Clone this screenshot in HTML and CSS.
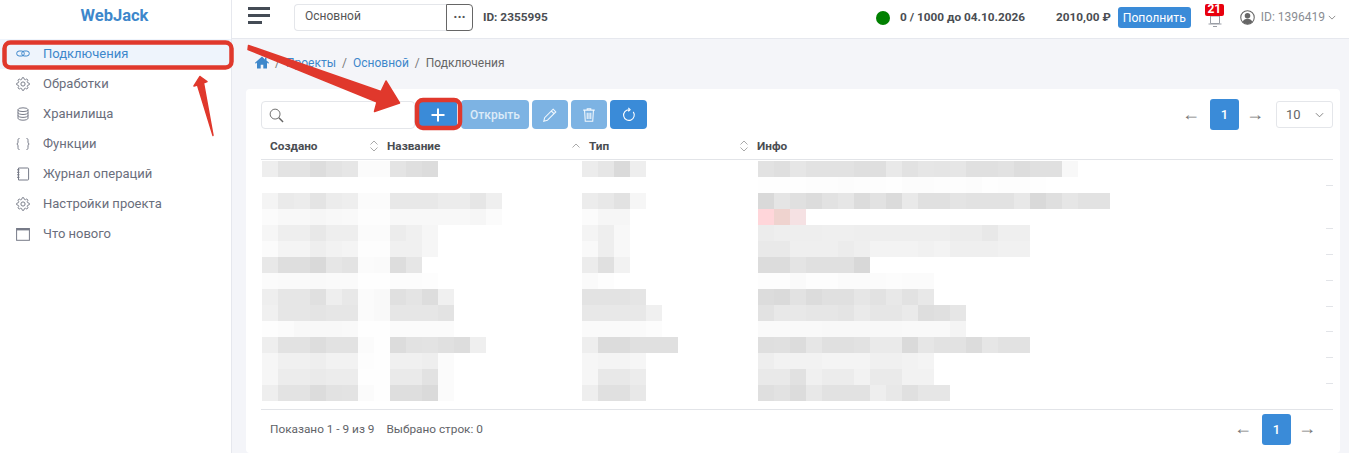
FILE: index.html
```html
<!DOCTYPE html>
<html lang="en">
<head>
    <meta charset="UTF-8">
    <meta name="viewport" content="width=device-width, initial-scale=1.0">
    <title>Подключения - WebJack</title>
    <link rel="stylesheet" href="styles.css">
</head>
<body>
    <svg class="defs" width="0" height="0">
        <symbol id="i-gear" viewBox="0 0 24 24">
            <g stroke-width="1.7">
            <circle cx="12" cy="12" r="3.6"/>
            <path d="M19.4 15a1.65 1.65 0 0 0 .33 1.82l.06.06a2 2 0 0 1 0 2.83 2 2 0 0 1-2.83 0l-.06-.06a1.65 1.65 0 0 0-1.82-.33 1.65 1.65 0 0 0-1 1.51V21a2 2 0 0 1-2 2 2 2 0 0 1-2-2v-.09A1.65 1.65 0 0 0 9 19.4a1.65 1.65 0 0 0-1.82.33l-.06.06a2 2 0 0 1-2.83 0 2 2 0 0 1 0-2.83l.06-.06a1.65 1.65 0 0 0 .33-1.82 1.65 1.65 0 0 0-1.51-1H3a2 2 0 0 1-2-2 2 2 0 0 1 2-2h.09A1.65 1.65 0 0 0 4.6 9a1.65 1.65 0 0 0-.33-1.82l-.06-.06a2 2 0 0 1 0-2.83 2 2 0 0 1 2.83 0l.06.06a1.65 1.65 0 0 0 1.82.33H9a1.65 1.65 0 0 0 1-1.51V3a2 2 0 0 1 2-2 2 2 0 0 1 2 2v.09a1.65 1.65 0 0 0 1 1.51 1.65 1.65 0 0 0 1.82-.33l.06-.06a2 2 0 0 1 2.83 0 2 2 0 0 1 0 2.83l-.06.06a1.65 1.65 0 0 0-.33 1.82V9a1.65 1.65 0 0 0 1.51 1H21a2 2 0 0 1 2 2 2 2 0 0 1-2 2h-.09a1.65 1.65 0 0 0-1.51 1z"/>
            </g>
        </symbol>
        <symbol id="i-sort" viewBox="0 0 10 14">
            <path d="M1.5 5.5 5 2l3.5 3.5M1.5 8.5 5 12l3.5-3.5"/>
        </symbol>
    </svg>

    <aside class="sidebar">
        <div class="logo">WebJack</div>
        <nav class="menu">
            <a class="menu-item active">
                <svg class="menu-icon" viewBox="0 0 14 14"><rect x="0.7" y="4" width="7.6" height="5" rx="2.5"/><rect x="5.7" y="4" width="7.6" height="5" rx="2.5"/></svg>
                Подключения
            </a>
            <a class="menu-item">
                <svg class="menu-icon"><use href="#i-gear"/></svg>
                Обработки
            </a>
            <a class="menu-item">
                <svg class="menu-icon" viewBox="0 0 14 14"><ellipse cx="7" cy="2.7" rx="5" ry="1.9"/><path d="M2 2.7v8.6c0 1 2.2 1.9 5 1.9s5-.9 5-1.9V2.7M2 5.6c0 1 2.2 1.9 5 1.9s5-.9 5-1.9M2 8.5c0 1 2.2 1.9 5 1.9s5-.9 5-1.9"/></svg>
                Хранилища
            </a>
            <a class="menu-item">
                <svg class="menu-icon" viewBox="0 0 14 14"><path d="M3.5 1.5c-1.5 0-1.5.8-1.5 2v1.7c0 1-.4 1.6-1.2 1.8.8.2 1.2.8 1.2 1.8v1.7c0 1.2 0 2 1.5 2M10.5 1.5c1.5 0 1.500.8 1.500 2v1.700c0 1 .4 1.600 1.200 1.800-.8.2-1.200.8-1.200 1.800v1.700c0 1.200 0 2-1.500 2"/></svg>
                Функции
            </a>
            <a class="menu-item">
                <svg class="menu-icon" viewBox="0 0 14 14"><path d="M2.500 1h9.300a.8.8 0 0 1 .8.8v10.400a.8.8 0 0 1-.8.8H2.500V1zM1 2.800h2.500M1 5.300h2.500M1 7.800h2.500M1 10.300h2.500"/></svg>
                Журнал операций
            </a>
            <a class="menu-item">
                <svg class="menu-icon"><use href="#i-gear"/></svg>
                Настройки проекта
            </a>
            <a class="menu-item">
                <svg class="menu-icon" viewBox="0 0 14 14"><rect x="0.600" y="1.500" width="12.800" height="11.800"/><path class="menu-icon-bold" d="M.6 2.400h12.800"/></svg>
                Что нового
            </a>
        </nav>
    </aside>

    <div class="main">
        <header class="topbar">
            <div class="burger"><span></span><span></span><span class="short"></span></div>
            <div class="project-select">
                <div class="project-name">Основной</div>
                <div class="project-more">···</div>
            </div>
            <div class="strong project-id">ID: 2355995</div>
            <div class="status-dot"></div>
            <div class="strong quota">0 / 1000 до 04.10.2026</div>
            <div class="strong balance">2010,00 ₽</div>
            <button class="topup">Пополнить</button>
            <div class="bell">
                <svg viewBox="0 0 18 14"><path d="M4.500 2h9v7.500h-9zM2.500 10h13M7 12.500h4"/></svg>
                <span class="bell-count">21</span>
            </div>
            <svg class="user-icon" viewBox="0 0 14 14">
                <circle class="user-ring" cx="7" cy="7" r="6.300"/>
                <circle cx="7" cy="5.300" r="2.600"/>
                <path d="M2.400 11.200c.8-2 2.600-3 4.600-3s3.800 1 4.600 3A6 6 0 0 1 7 13.200a6 6 0 0 1-4.600-2z"/>
            </svg>
            <div class="user-id">ID: 1396419</div>
            <svg class="chevron" viewBox="0 0 10 6"><path d="M1 1l4 4 4-4"/></svg>
        </header>

        <div class="breadcrumb">
            <svg class="home" viewBox="0 0 14 13"><path d="M7 .5 0 6.800l.8.9L2 6.600V12.500h3.700V8.800h2.600v3.700H12V6.600l1.200 1.100.8-.9-2.500-2.300V1.500H10v1.900z"/></svg>
            <span class="sep">/</span>
            <a>Проекты</a>
            <span class="sep">/</span>
            <a>Основной</a>
            <span class="sep">/</span>
            <span class="current">Подключения</span>
        </div>

        <section class="card">
            <div class="toolbar">
                <div class="search">
                    <svg viewBox="0 0 16 16"><circle cx="6.500" cy="6.500" r="5.300"/><path class="search-handle" d="M10.500 10.500 15 15"/></svg>
                </div>
                <button class="btn btn-add">
                    <svg viewBox="0 0 16 16"><path d="M8 1.500v13M1.500 8h13"/></svg>
                </button>
                <button class="btn btn-off btn-open">Открыть</button>
                <button class="btn btn-off btn-icon">
                    <svg viewBox="0 0 18 18"><path d="M12.500 2.500l3 3L6 15l-4 1 1-4zM10.500 4.500l3 3"/></svg>
                </button>
                <button class="btn btn-off btn-icon">
                    <svg viewBox="0 0 18 18"><path d="M2.500 3.500h13M7 3.500V2h4v1.500M4 3.500l.8 12.500h8.400L14 3.500M7 6.500v7M9 6.500v7M11 6.500v7"/></svg>
                </button>
                <button class="btn btn-icon btn-reload">
                    <svg viewBox="0 0 18 18"><path d="M13.800 5.500A6 6 0 1 1 9 3M8.200 1 10.300 3 8.200 5"/></svg>
                </button>
                <div class="pager pager-top">
                    <span class="arrow">←</span>
                    <span class="page-num">1</span>
                    <span class="arrow">→</span>
                </div>
                <div class="per-page">
                    10
                    <svg class="chevron" viewBox="0 0 10 6"><path d="M1 1l4 4 4-4"/></svg>
                </div>
            </div>

            <div class="thead">
                <div class="th th-first">Создано <svg class="sort"><use href="#i-sort"/></svg></div>
                <div class="th">Название <svg class="sort sort-up" viewBox="0 0 10 14"><path d="M1.500 8.500 5 5l3.500 3.500"/></svg></div>
                <div class="th">Тип <svg class="sort"><use href="#i-sort"/></svg></div>
                <div class="th">Инфо</div>
            </div>

            <div class="rows">
                <div class="row"></div>
                <div class="row row-tall"></div>
                <div class="row"></div>
                <div class="row"></div>
                <div class="row"></div>
                <div class="row"></div>
                <div class="row"></div>
                <div class="row"></div>
                <div class="row row-last"></div>
                <div class="blur" id="blur"></div>
            </div>

            <div class="tfoot">
                <span>Показано 1 - 9 из 9</span>
                <span>Выбрано строк: 0</span>
                <div class="pager pager-bottom">
                    <span class="arrow">←</span>
                    <span class="page-num">1</span>
                    <span class="arrow">→</span>
                </div>
            </div>
        </section>
    </div>

    <!-- red annotations drawn over the screenshot -->
    <svg class="marks" viewBox="0 0 1349 453">
        <rect class="mark-box" x="4.500" y="42.500" width="227" height="25" rx="6"/>
        <rect class="mark-box" x="417" y="100" width="43" height="28" rx="6"/>
        <polygon class="mark-arrow" points="248.500,45.500 381,91.500 386,81 399.500,103 374.500,111.500 377,102 248,49.500"/>
        <polygon class="mark-arrow" points="200,76.500 207,81.500 203.500,83 213,135.500 197.500,85 194,86"/>
    </svg>

    <script src="app.js"></script>
</body>
</html>
```

FILE: styles.css
```css
* {
    box-sizing: border-box;
}

html, body {
    height: 453px;
    overflow: hidden;
}

body {
    font-family: Roboto, 'Liberation Sans', sans-serif;
    font-size: 13px;
    margin: 0;
    background: #f4f5f9;
    color: #5f6368;
    display: flex;
}

.defs {
    position: absolute;
}

svg {
    display: block;
    fill: none;
    stroke: currentColor;
}

/* sidebar */
.sidebar {
    width: 232px;
    flex: none;
    background: white;
    border-right: 1px solid #e6e8ee;
}

.logo {
    height: 39px;
    padding: 6px 2px 0 0;
    text-align: center;
    font-size: 16.500px;
    line-height: 20px;
    font-weight: 700;
    color: #3d87cb;
}

.menu-item {
    display: flex;
    align-items: center;
    gap: 13px;
    height: 30px;
    padding: 0 0 1px 16px;
    color: #6a6e7c;
    line-height: 30px;
}

.menu-item.active {
    background: #eef4fc;
    color: #3d87cb;
}

.menu-icon {
    width: 14px;
    height: 14px;
    stroke-width: 1;
    color: #777b88;
}

.active .menu-icon {
    color: #3d87cb;
}

.menu-icon-bold {
    stroke-width: 2;
}

/* top bar */
.main {
    flex: 1;
    min-width: 0;
}

.topbar {
    display: flex;
    align-items: center;
    height: 39px;
    padding: 0 13px 8px 16px;
    background: white;
    border-bottom: 1px solid #e6e8ee;
    color: #555;
}

.burger {
    width: 22px;
    margin-right: 24px;
}

.burger span {
    display: block;
    height: 3px;
    margin-bottom: 4px;
    background: #444b55;
}

.burger span:last-child {
    margin-bottom: 0;
}

.burger .short {
    width: 14px;
}

.project-select {
    display: flex;
    width: 179px;
    height: 27px;
    margin-top: 5px;
    font-size: 12px;
}

.project-name {
    flex: 1;
    padding-left: 10px;
    line-height: 23px;
    border: 1px solid #e4e6ea;
    border-right: none;
    border-radius: 4px 0 0 4px;
}

.project-more {
    width: 27px;
    text-align: center;
    line-height: 24px;
    font-size: 14px;
    font-weight: 700;
    border: 1px solid #666;
    border-radius: 0 4px 4px 0;
}

.strong {
    font-size: 11.800px;
    font-weight: 700;
    color: #4a4d52;
    margin-top: 3px;
}

.project-id {
    margin-left: 10px;
}

.status-dot {
    width: 14px;
    height: 14px;
    margin: 6px 10px 0 auto;
    border-radius: 50%;
    background: #008000;
}

.balance {
    margin-left: 31px;
}

.topup {
    width: 73px;
    height: 21px;
    margin: 5px 0 0 7px;
    padding: 0;
    border: none;
    border-radius: 3px;
    background: #3a8bd8;
    color: white;
    font: 12.200px Roboto, sans-serif;
}

.bell {
    position: relative;
    width: 20px;
    height: 22px;
    margin: 6px 0 0 14px;
    color: #9a9ea6;
}

.bell svg {
    position: absolute;
    left: 1px;
    top: 7px;
    width: 18px;
    height: 14px;
}

.bell-count {
    position: absolute;
    left: 0;
    top: -3px;
    width: 19px;
    height: 12px;
    border-radius: 2px;
    background: #e8000d;
    color: white;
    font-size: 12px;
    line-height: 10px;
    font-weight: 700;
    text-align: center;
}

.user-icon {
    width: 15px;
    height: 15px;
    margin: 4px 0 0 15px;
    color: #666;
    stroke: none;
    fill: #666;
}

.user-ring {
    fill: none;
    stroke: #666;
}

.user-id {
    margin: 3px 0 0 6px;
    font-size: 12px;
    color: #8a8d93;
}

.topbar .chevron {
    width: 8px;
    height: 5px;
    margin: 5px 0 0 3px;
    color: #777;
}

/* breadcrumb */
.breadcrumb {
    display: flex;
    align-items: center;
    gap: 6px;
    height: 50px;
    padding: 0 0 3px 23px;
    font-size: 12px;
    color: #666;
}

.breadcrumb a {
    color: #3d87cb;
}

.home {
    width: 14px;
    height: 13px;
    fill: #3d87cb;
    stroke: none;
}

.sep {
    color: #777;
}

/* card */
.card {
    margin: 0 9px 0 14px;
    height: 364px;
    padding: 10px 7px 0 15px;
    background: white;
    border-radius: 4px;
}

.toolbar {
    display: flex;
    align-items: center;
    height: 31px;
}

.search {
    width: 154px;
    height: 28px;
    margin-right: 4px;
    padding: 6px 0 0 7px;
    border: 1px solid #e4e6ea;
    border-radius: 4px;
    color: #666;
}

.search svg {
    width: 15px;
    height: 15px;
}

.search-handle {
    stroke-width: 1.600;
}

.btn {
    height: 29px;
    padding: 0;
    border: none;
    border-radius: 4px;
    margin-right: 3px;
    color: white;
    background: #3a8bd8;
    font: 500 12px Roboto, sans-serif;
    display: flex;
    align-items: center;
    justify-content: center;
}

.btn-add {
    width: 38px;
    margin-right: 4px;
}

.btn-add svg {
    width: 16px;
    height: 16px;
    stroke-width: 2;
}

.btn-off {
    background: #7db3e3;
    color: #dcebf8;
}

.btn-open {
    width: 68px;
}

.btn-icon {
    width: 36px;
}

.btn-icon svg {
    width: 16px;
    height: 16px;
    stroke-width: 1.200;
}

.btn-off svg {
    color: #f2f8fd;
}

.btn-reload {
    width: 37px;
}

.pager {
    display: flex;
    align-items: center;
    font-size: 18px;
    color: #777;
}

.pager-top {
    margin-left: auto;
    margin-right: 15px;
}

.page-num {
    width: 29px;
    height: 31px;
    margin: 0 11px 0 15px;
    border-radius: 3px;
    background: #3a8bd8;
    color: white;
    font-size: 13px;
    font-weight: 500;
    line-height: 31px;
    text-align: center;
}

.arrow {
    width: 14px;
    margin: -2px -1px 0 -2px;
    text-align: center;
}

.page-num + .arrow {
    margin: -2px 1px 0 -4px;
}

.per-page {
    display: flex;
    align-items: center;
    justify-content: space-between;
    width: 57px;
    height: 27px;
    padding: 0 8px 0 9px;
    border: 1px solid #e4e6ea;
    border-radius: 3px;
    font-size: 13px;
    color: #666;
}

.per-page .chevron {
    width: 9px;
    height: 6px;
    color: #777;
}

/* table */
.thead {
    display: grid;
    grid-template-columns: 126px 202px 168px 1fr;
    align-items: center;
    height: 30px;
    border-bottom: 1px solid #e2e4e8;
    font-size: 11.800px;
}

.th {
    display: flex;
    align-items: center;
    justify-content: space-between;
    padding: 0 8px 0 0;
    margin-top: 2px;
    font-weight: 700;
    color: #4a4d52;
}

.th-first {
    padding-left: 9px;
}

.sort {
    width: 10px;
    height: 14px;
    flex: none;
    color: #aaa;
}

.rows {
    position: relative;
}

.row {
    display: flex;
    justify-content: flex-end;
    align-items: flex-end;
    height: 25.860px;
}

.row::after {
    content: "";
    width: 7px;
    height: 1px;
    background: #e2e4e8;
}

.row-tall {
    height: 43px;
}

.row:first-child {
    height: 26px;
}

.row-last {
    height: 25px;
}

.row-last::after {
    display: none;
}

/* pixelated rows lie over the table body */
.blur {
    position: absolute;
    left: 1px;
    top: 1px;
    display: grid;
    grid-template-columns: 128px 192px 176px 1fr;
}

.blur-row {
    display: flex;
    height: 16px;
}

.blur-cell {
    width: 16px;
    height: 16px;
}

.tfoot {
    display: flex;
    align-items: center;
    gap: 12px;
    height: 38px;
    padding-left: 9px;
    padding-top: 1px;
    border-top: 1px solid #e2e4e8;
    font-size: 11.800px;
    color: #5f6368;
}

.pager-bottom {
    margin-left: auto;
    margin-right: 20px;
}

.marks {
    position: absolute;
    left: 0;
    top: 0;
    width: 1349px;
    height: 453px;
    pointer-events: none;
}

.mark-box {
    stroke: #e0382c;
    stroke-width: 4.500;
}

.mark-arrow {
    fill: #e0382c;
    stroke: #e0382c;
    stroke-width: 1.500;
    stroke-linejoin: round;
}
```

FILE: app.js
```js
// Blurred table content: one list per column, one line per 16px row, grey level of each cell
const BLUR_COLUMNS = [
    [
        'ee e3 e3 dd e3 e6 fb fb',
        '',
        'f4 ea ec e4 ec ee fb fb',
        'fb f8 f8 f6 f8 f9 fd fd',
        'f6 ee ee e8 ee ee fb fb',
        'fb f4 f4 ee f2 f4 fd fd',
        'e8 de de d9 e6 e3 fb fa',
        'fb fa fa f9 fa fa fe fe',
        'ee e6 e6 e0 ee e8 fb f9',
        'f0 e6 e6 e4 e6 e6 fb f9',
        'fd fb f8 f8 f8 f9 fe fe',
        'ee e2 e2 dd e2 e2 fb fe',
        'f6 f0 f0 ee f2 f2 fd fe',
        'f6 ec ec ea ec ec fe fe',
        'ee e3 e3 dc e2 e3 fb fe'
    ],
    [
        'e4 df dc',
        '',
        'e8 e8 e8 ec ec e6 ef',
        'f8 f8 f8 f8 f8 f6 fb',
        'ec f0 f6',
        'f0 f0 f6',
        'dd e6',
        'fc fc fd',
        'e0 e4 dd f0',
        'e6 e6 e6 e3',
        'fb fb fb fb',
        'dc e2 e3 e0 dd ef',
        'f0 f0 ee fb',
        'ea ea e2 fb',
        'de de da fb'
    ],
    [
        'ec e6 da ee',
        '',
        'ec e8 e2 f6',
        'fb f6 f6',
        'f4 ee f8',
        'f9 ee f8',
        'ec e0 f2',
        'fa fd',
        'e3 e3 e3 e5',
        'e8 e8 e8 e8 f0',
        'fa fa fa fa fc',
        'ee dc dc e0 e0 e0',
        'f6 f4 f4 f6',
        'f6 e8 e8 ec',
        'ee e0 e0 e8'
    ],
    [
        'e2 df e6 e2 e2 e2 df df e9 e2 e6 e5 e6 e0 e0 e2 dd e0 e0 f8',
        'fe fe fe fd fd fc fd fd fe fc fc fd fd fc fe fd fd fe',
        'd9 e5 e0 dc e2 e6 dc e2 db e9 e0 e0 e4 e2 e2 e2 e8 d9 df e6 e2 e2',
        '#ffd6da #efd3cf #f5e1e3',
        'ec ee ee ee ef ef ee ee ee ee ee ee ec ec e8 ef ef',
        'e9 e9 ef ef ef ec ef f3 f3 f3 f1 f3 ef ef ef f1 f1',
        'dc dc e4 e0 e0 e0 d8',
        'fd fd fa fd fd fb fb fb fc fb fb',
        'dc da e2 dc e0 e0 e6 e2 e8 e2 e8',
        'e2 e8 e8 e6 e6 e4 ea e6 e6 ea de e0 e6',
        'fa fa f9 f9 f8 f8 f8 f8 f8 f9 f9 f9 f4',
        'df e0 dc e6 e0 e0 e2 ea ea da e6 e2 e2 dc e6 e2 e2',
        'ee f2 f2 f2 f4 f4 f4 f0 f0 f2 f4',
        'e9 e9 e1 f0 ec ec f2 ea ea f2 f2',
        'df e2 dc e8 e2 e2 e2 ee e8 e0 e6 e6'
    ]
];

function buildColumn(lines) {
    const column = document.createElement('div');
    lines.forEach(line => {
        const row = document.createElement('div');
        row.className = 'blur-row';
        line.split(' ').filter(Boolean).forEach(value => {
            const cell = document.createElement('div');
            cell.className = 'blur-cell';
            cell.style.background = value[0] === '#' ? value : `#${value}${value}${value}`;
            row.appendChild(cell);
        });
        column.appendChild(row);
    });
    return column;
}

const blur = document.getElementById('blur');
BLUR_COLUMNS.forEach(lines => blur.appendChild(buildColumn(lines)));
```
